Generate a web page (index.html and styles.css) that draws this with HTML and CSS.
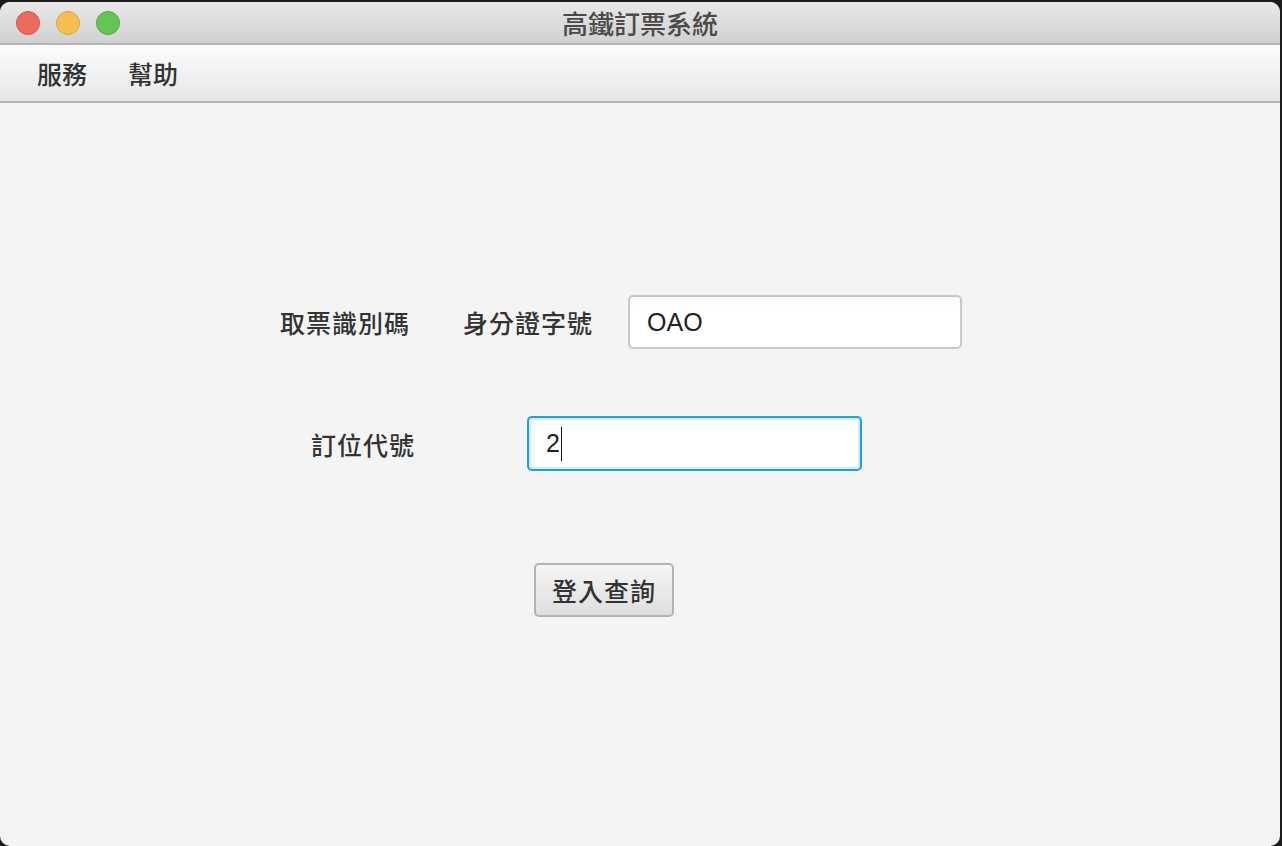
FILE: index.html
```html
<!DOCTYPE html>
<html lang="zh-Hant">
<head>
<meta charset="utf-8">
<title>高鐵訂票系統</title>
<link rel="stylesheet" href="styles.css">
</head>
<body>
<div class="window">
  <div class="titlebar">
    <div class="lights">
      <span class="light red"></span>
      <span class="light yellow"></span>
      <span class="light green"></span>
    </div>
    <div class="title">高鐵訂票系統</div>
    <div class="spacer"></div>
  </div>
  <div class="menubar">
    <span class="menu-item">服務</span>
    <span class="menu-item">幫助</span>
  </div>
  <main class="content">
    <div class="row row-id">
      <span class="label">取票識別碼</span>
      <span class="label label-id">身分證字號</span>
      <div class="field field-id">OAO</div>
    </div>
    <div class="row row-code">
      <span class="label">訂位代號</span>
      <div class="field field-code focused">2<span class="caret"></span></div>
    </div>
    <div class="row row-btn">
      <button class="btn">登入查詢</button>
    </div>
  </main>
</div>
</body>
</html>
```
FILE: styles.css
```css
html, body {
  margin: 0;
  padding: 0;
}
body {
  background: #1c1c1c;
  width: 1282px;
  height: 846px;
  overflow: hidden;
  font-family: "Noto Sans CJK TC", "Noto Sans CJK SC", sans-serif;
  color: #333;
}
.window {
  margin-top: 2px;
  width: 1280px;
  height: 844px;
  background: #f4f4f4;
  border-radius: 10px;
  overflow: hidden;
  display: flex;
  flex-direction: column;
}
.titlebar {
  height: 41px;
  border-bottom: 2px solid #b4b4b4;
  background: linear-gradient(#e8e8e8, #d1d1d1);
  display: grid;
  grid-template-columns: 1fr auto 1fr;
  align-items: center;
}
.lights {
  display: flex;
  gap: 16px;
  padding-left: 16px;
}
.light {
  width: 24px;
  height: 24px;
  border-radius: 50%;
  box-sizing: border-box;
}
.red { background: #ee6a5f; border: 1px solid #d9534a; }
.yellow { background: #f6be4f; border: 1px solid #dfa23a; }
.green { background: #62c554; border: 1px solid #52a842; }
.title {
  font-size: 26px;
  color: #4a4a4a;
  line-height: 41px;
  font-weight: 500;
}
.menubar {
  height: 56px;
  border-bottom: 2px solid #b5b5b5;
  background: linear-gradient(#fcfcfc, #e7e7e7);
  display: flex;
  align-items: center;
  gap: 41px;
  padding-left: 37px;
}
.menu-item {
  font-size: 25px;
  line-height: 30px;
  color: #333;
  font-weight: 500;
}
.content {
  flex: 1;
  display: flex;
  flex-direction: column;
  padding-top: 192px;
}
.row {
  display: flex;
  align-items: center;
}
.label {
  font-size: 25px;
  color: #333;
  letter-spacing: 1px;
  font-weight: 500;
}
.row-id {
  padding-left: 280px;
}
.label-id {
  margin-left: 53px;
}
.field {
  box-sizing: border-box;
  background: linear-gradient(#f9f9f9, #ffffff 20%);
  border: 2px solid #c8c8c8;
  border-radius: 5px;
  font-family: "Liberation Sans", "Noto Sans CJK TC", sans-serif;
  font-size: 25px;
  color: #222;
  display: flex;
  align-items: center;
}
.field-id {
  margin-left: 35px;
  width: 334px;
  height: 54px;
  padding-left: 17px;
}
.row-code {
  margin-top: 67px;
  padding-left: 311px;
}
.field-code {
  margin-left: 112px;
  width: 335px;
  height: 55px;
  padding-left: 17px;
}
.focused {
  border: 2px solid #1aa2dc;
  box-shadow: inset 0 0 0 2px #d8ebf5;
  background: #fff;
}
.caret {
  display: inline-block;
  width: 1px;
  height: 34px;
  background: #111;
  margin-left: 1px;
}
.row-btn {
  margin-top: 92px;
  padding-left: 534px;
}
.btn {
  box-sizing: border-box;
  width: 140px;
  height: 54px;
  border: 2px solid #b3b3b3;
  border-radius: 5px;
  background: linear-gradient(#f6f6f6, #dedede);
  font-family: "Noto Sans CJK TC", "Noto Sans CJK SC", sans-serif;
  font-size: 25px;
  font-weight: 500;
  color: #333;
  letter-spacing: 1px;
  padding: 0;
}
```
